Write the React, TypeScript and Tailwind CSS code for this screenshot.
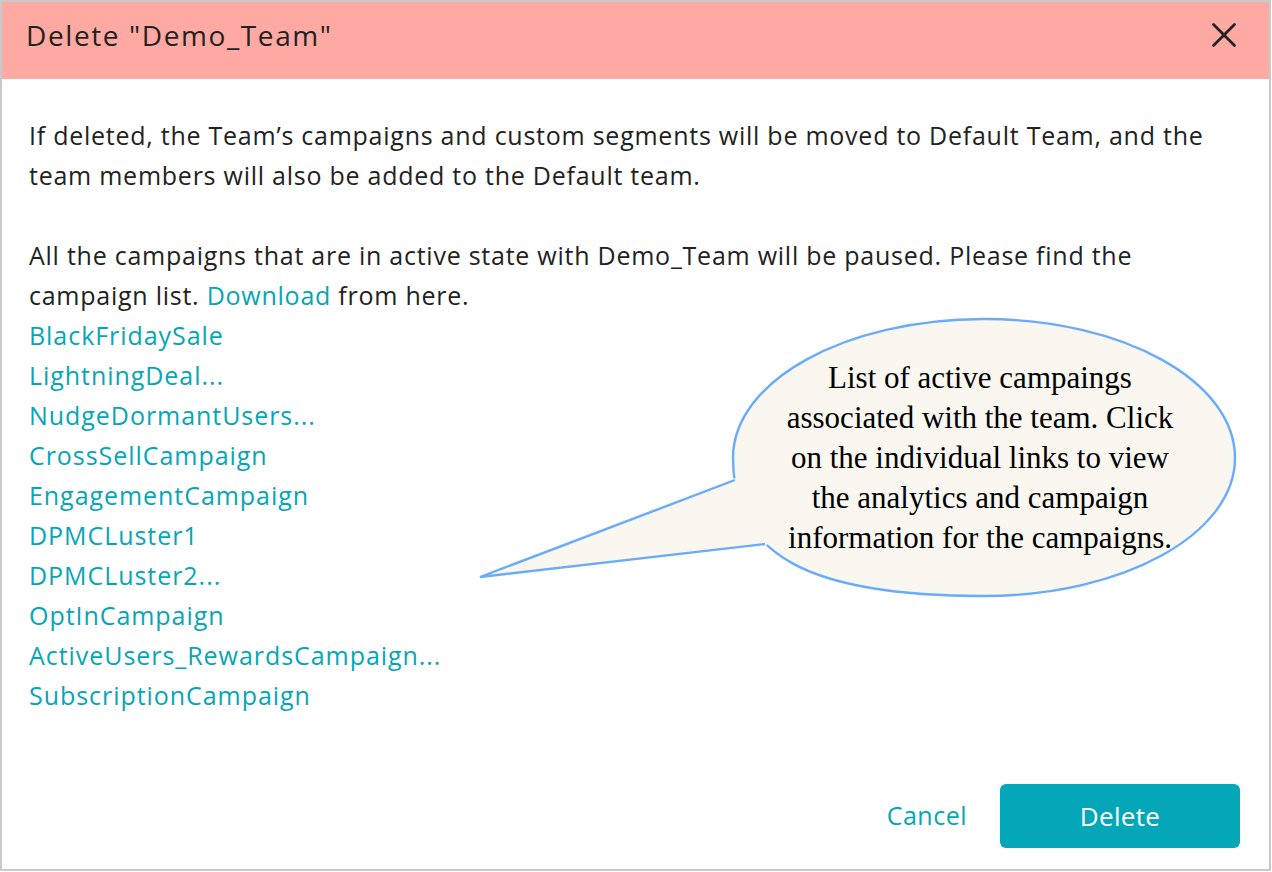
import { X } from 'lucide-react';

const campaigns = [
  'BlackFridaySale',
  'LightningDeal...',
  'NudgeDormantUsers...',
  'CrossSellCampaign',
  'EngagementCampaign',
  'DPMCLuster1',
  'DPMCLuster2...',
  'OptInCampaign',
  'ActiveUsers_RewardsCampaign...',
  'SubscriptionCampaign',
];

// oval callout pointing at the campaign list
function Callout() {
  return (
    <div className="absolute left-0 top-0 w-[1272px] h-[872px] pointer-events-none">
      <svg width="1272" height="872" className="absolute inset-0">
        <path
          d="M 731 456 C 731 379 843 317 982 317 C 1121 317 1233 379 1233 456 C 1233 532 1121 594 982 594 C 806 594 731 553 731 456 Z"
          fill="#faf7f1"
          stroke="#6aabfb"
          strokeWidth="2.4"
        />
        <polygon points="733,476 478,575 765,543 790,500" fill="#faf7f1" />
        <polyline points="733,478 478,575 763,542" fill="none" stroke="#6aabfb" strokeWidth="2.4" />
      </svg>
      <div
        className="absolute left-[766px] top-[356px] w-[424px] text-center text-[31px] leading-[40px] text-black"
        style={{ fontFamily: '"Liberation Serif", "Times New Roman", serif' }}
      >
        List of active campaings
        <br />
        associated with the team. Click
        <br />
        on the individual links to view
        <br />
        the analytics and campaign
        <br />
        information for the campaigns.
      </div>
    </div>
  );
}

export default function App() {
  return (
    <div
      className="relative w-[1271px] h-[871px] border-2 border-[#c9c9c9] bg-white flex flex-col text-[#222222]"
      style={{ fontFamily: '"Open Sans", "Noto Sans", sans-serif' }}
    >
      <div className="h-[77px] shrink-0 bg-[#ffa9a3] flex items-center justify-between pl-6 pr-[24px] pb-[12px]">
        <h1 className="text-[28px] tracking-[1.6px]">Delete "Demo_Team"</h1>
        <X size={42} strokeWidth={1.6} className="text-[#222222]" />
      </div>

      <div className="flex-1 px-[27px] pt-[36px] text-[25px] leading-[40px] tracking-[0.75px]">
        <p>
          If deleted, the Team’s campaigns and custom segments will be moved to Default Team, and the
          <br />
          team members will also be added to the Default team.
        </p>
        <p className="mt-[40px]">
          All the campaigns that are in active state with Demo_Team will be paused. Please find the
          <br />
          campaign list. <a className="text-[#06a6b6]">Download</a> from here.
        </p>
        <ul className="text-[#06a6b6] tracking-[0.95px]">
          {campaigns.map((c) => (
            <li key={c}>{c}</li>
          ))}
        </ul>
      </div>

      <div className="flex items-center justify-end gap-[33px] pr-[29px] pb-[21px]">
        <button className="text-[25px] tracking-[0.5px] text-[#06a6b6]">Cancel</button>
        <button className="w-[240px] h-[64px] rounded-[6px] bg-[#03a7b7] text-white text-[26px] tracking-[0.3px]">
          Delete
        </button>
      </div>

      <Callout />
    </div>
  );
}
